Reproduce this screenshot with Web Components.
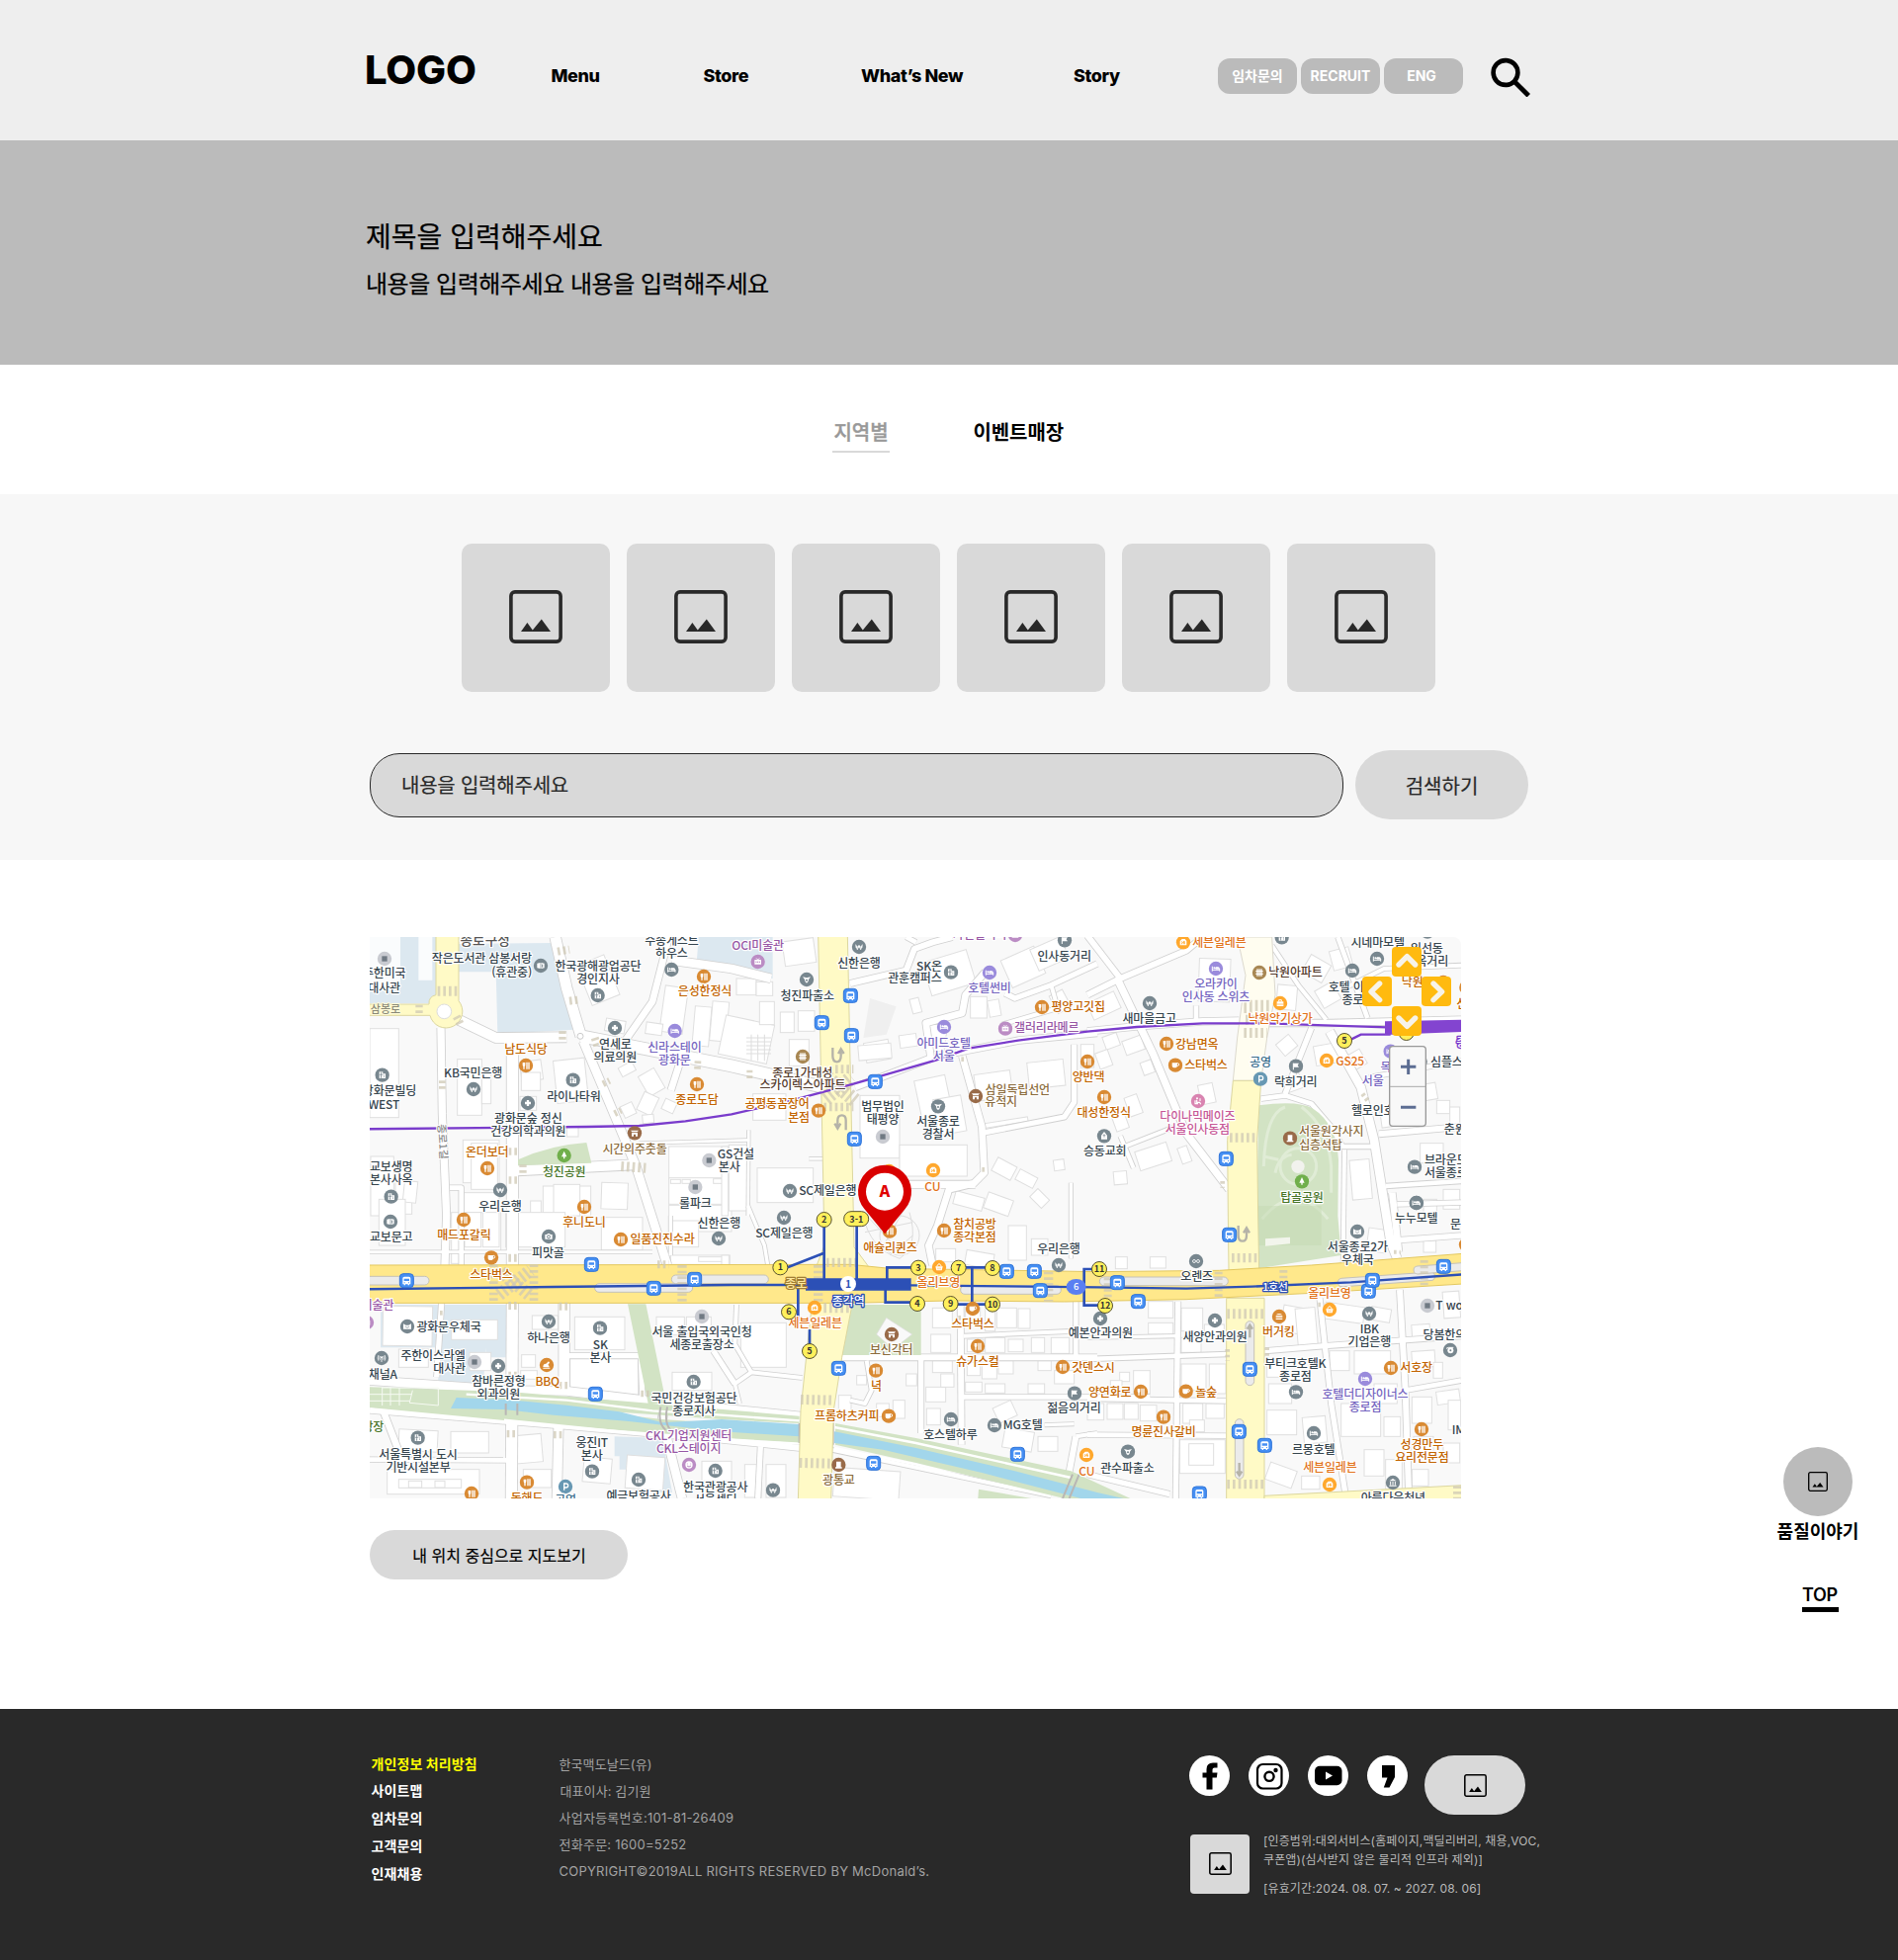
<!DOCTYPE html>
<html lang="ko">
<head>
<meta charset="utf-8">
<title>매장 찾기</title>
<style>
body{margin:0;background:#fff;color:#000;font-family:Inter,"Noto Sans CJK KR",sans-serif;width:1920px;position:relative}
</style>
</head>
<body>
<store-page></store-page>
<script>
const define=(name,html,after)=>customElements.define(name,class extends HTMLElement{
  constructor(){super();this.attachShadow({mode:'open'});}
  connectedCallback(){this.shadowRoot.innerHTML=typeof html==='function'?html(this):html;if(after)after(this);}
});

define('picture-icon',`<style>:host{display:block;flex:none}svg{display:block;width:100%;height:100%}</style>
<svg viewBox="0 0 54 54"><rect x="1.9" y="1.9" width="50.2" height="50.2" rx="4" fill="none" stroke="currentColor" stroke-width="3.6"/><path d="M12 42L18.400 33L23.800 40.500L32.800 29.500L42 42z" fill="currentColor"/></svg>`);

define('nav-link',`<style>:host{display:block;flex:none;font:800 18px/24px Inter,"Noto Sans CJK KR",sans-serif;white-space:nowrap;letter-spacing:-.4px}</style><slot></slot>`);
define('pill-link',`<style>:host{display:flex;align-items:center;justify-content:center;width:80px;height:36px;border-radius:12px;background:#bbb;color:#fff;font:700 14px/20px Inter,"Noto Sans CJK KR",sans-serif}</style><slot></slot>`);

define('site-header',`<style>
:host{display:flex;align-items:center;box-sizing:border-box;height:142px;padding:12px 0 0 369px;background:#eee}
.logo{width:188.500px;font:800 40px/48px Inter,sans-serif;margin-bottom:13px;letter-spacing:-.2px}
.pills{display:flex;gap:4px;width:276px}
svg{width:40px;height:40px;display:block;margin-top:1px}
</style>
<div class="logo">LOGO</div>
<nav-link style="width:154px">Menu</nav-link><nav-link style="width:159.500px">Store</nav-link><nav-link style="width:215px">What’s New</nav-link><nav-link style="width:146px">Story</nav-link>
<div class="pills"><pill-link>임차문의</pill-link><pill-link>RECRUIT</pill-link><pill-link style="padding-right:4px;box-sizing:border-box">ENG</pill-link></div>
<svg viewBox="0 0 40 40" fill="none" stroke="#000"><circle cx="15" cy="15.500" r="12.400" stroke-width="4.600"/><path d="M24 24.500L38.300 38.800" stroke-width="4.800"/></svg>`);

define('hero-banner',`<style>
:host{display:block;box-sizing:border-box;height:227px;background:#bbb;padding:77.500px 0 0 370px;-webkit-text-stroke:.25px #000}
h1,p{margin:0;font-weight:400}h1{font-size:28px;line-height:40px}p{font-size:24px;line-height:34px;margin-top:11px;letter-spacing:-.48px}
</style><h1><slot name="title"></slot></h1><p><slot name="text"></slot></p>`);

define('tab-item',`<style>
:host{display:block;flex:none;font-size:20px;line-height:30px;text-align:center;font-weight:700;padding-bottom:3px;white-space:nowrap;letter-spacing:-.1px}
:host([selected]){width:58px;color:#999;border-bottom:2px solid #d9d9d9;font-weight:500;-webkit-text-stroke:.4px #999}
</style><slot></slot>`);
define('tab-bar',`<style>:host{display:flex;align-items:flex-start;box-sizing:border-box;height:131px;padding:54px 0 0 842px;gap:84.500px}</style><slot></slot>`);

define('image-card',`<style>:host{display:flex;align-items:center;justify-content:center;width:150px;height:150px;border-radius:10px;background:#d9d9d9;color:#292929}picture-icon{width:54px;height:54px;margin-top:-2px}</style><picture-icon></picture-icon>`);

define('round-button',`<style>:host{display:flex;align-items:center;justify-content:center;background:#d9d9d9;border-radius:40px;white-space:nowrap;-webkit-text-stroke:.2px currentColor}</style><slot></slot>`);

define('search-panel',`<style>
:host{display:block;box-sizing:border-box;height:370px;background:#f7f7f7;padding-top:50px}
.cards{display:flex;gap:17px;padding-left:467px}
.row{display:flex;align-items:center;gap:12px;padding-left:374px;margin-top:59px}
.field{box-sizing:border-box;width:985px;height:65px;border:1px solid #292929;border-radius:30px;background:#d9d9d9;color:#292929;font-size:20px;line-height:65px;padding-left:31px;letter-spacing:-.22px;-webkit-text-stroke:.2px #292929}
round-button{width:175px;height:70px;font-size:20px;color:#292929}
</style>
<div class="cards"><image-card></image-card><image-card></image-card><image-card></image-card><image-card></image-card><image-card></image-card><image-card></image-card></div>
<div class="row"><div class="field">내용을 입력해주세요</div><round-button>검색하기</round-button></div>`);

/* ---- map ---- Sheets are placed on one plane, three units per pixel. */
const SHEET={A:[0,0],B:[1110,0],C:[2220,0],D:[0,840],E:[1110,840],F:[2220,840]};
const at=(k,b)=>`<g transform="translate(${SHEET[k]})">${b}</g>`;

const ROADS={
A:`22 258,300 262,560 275,870 270,1020;30 290,265 425,330 640,328;32 683,325 640,180 605,24;36 683,325 735,335 1140,415 1420,480;26 690,340 800,600 850,720 945,1020;34 475,335 475,1020;30 490,733 845,715;20 820,335 900,220 950,24;20 985,400 956,490;26 960,95 1140,120 1260,150;8 860,650 1195,640;14 285,785 320,785 320,1020`,
B:`18 390,165 560,125 585,60 640,40 700,24;20 405,480 635,392 620,285 730,255 740,200 800,130;20 730,385 790,600 797,740 765,772 690,790 655,900 628,960 640,1020;22 560,775 770,775;16 785,620 1040,570 1070,525 1070,350;20 710,375 900,338 1140,315;16 860,195 890,210 1000,170 1140,105;12 1000,170 1020,240 850,290;8 265,697 312,697;8 82,610 80,870;10 1060,770 1060,1000;14 560,24 590,40`,
C:`18 0,200 100,150 300,65 350,24;18 100,150 0,20;22 95,160 200,380 300,620 430,790;20 0,310 150,295 350,280 460,278;20 540,285 740,285 1134,275;12 100,665 265,600;12 100,628 140,725;14 330,232 330,280;12 560,50 640,170 725,275;26 735,310 830,480 870,640 920,950 940,1000;16 680,300 600,500;14 527,515 600,505 680,530 740,600 775,660 880,660;18 885,622 1134,600;12 780,670 776,1010;14 905,780 1134,765;14 855,450 1134,400;16 930,945 1134,930;14 850,270 760,24;12 780,180 900,120 1134,110`,
D:`34 475,295 472,888;16 260,295 245,520;32 632,295 632,560;26 42,530 470,560 640,562 960,600 1360,640;18 42,620 600,665 1110,710 1350,735;16 645,455 865,455 870,590;20 82,620 140,770;14 42,770 460,772;28 615,670 610,888;26 935,605 930,650 990,888;16 1085,440 1150,540;8 42,140 900,140;10 955,150 955,30`,
E:`12 0,480 40,540 90,505 245,522;10 40,540 55,600;16 118,730 110,888;10 80,0 130,120 140,180;12 45,300 40,420 90,505;18 365,460 1140,460;16 605,455 605,690;18 725,300 728,725;14 1075,290 1075,460;14 735,580 1300,580;18 1075,700 1040,888;12 440,470 455,560 435,600 390,590;10 980,665 1070,662;12 1075,700 1140,690;12 735,395 1075,380;12 332,740 1000,880`,
F:`16 275,290 268,888;14 0,465 425,450;10 0,400 270,395;14 0,585 420,592;14 0,695 420,698;16 540,440 720,425 1134,395;16 705,280 740,600 785,888;18 948,255 965,560 975,870;14 965,560 1134,530;16 0,815 250,875;14 940,-5 1134,-10;20 925,-40 945,140`
};
const roads=()=>{let a='',b='';for(const k in ROADS){let x='',y='';for(const r of ROADS[k].split(';')){const i=r.indexOf(' ');const w=+r.slice(0,i),p=r.slice(i+1);
 x+=`<polyline points="${p}" stroke-width="${w+5}"/>`;y+=`<polyline points="${p}" stroke-width="${w}"/>`;}a+=at(k,x);b+=at(k,y);}
 return `<g fill="none" stroke-linejoin="round"><g stroke="#d0d0d0">${a}</g><g stroke="#fff">${b}</g></g>`;};

/* x y w h angle */
const HOUSES={
A:`42 302 88 270 0;308 395 74 170 0;382 420 28 110 0;500 400 65 60 -8;502 435 58 55 0;498 508 50 42 0;605 395 95 130 -6;800 410 46 30 -28;870 430 55 70 -30;862 500 48 60 25;808 530 38 38 -25;932 520 38 34 25;870 563 34 26 -5;745 770 80 80 2;930 175 70 140 8;880 285 50 35 8;690 90 90 130 -22;757 275 60 38 10;1025 235 50 120 5;1078 220 50 120 5;568 780 145 90 0;600 775 80 95 0;530 825 32 60 0;325 640 110 130 0;350 650 80 140 0;325 800 110 130 0;45 690 70 180 0;120 715 50 150 0;145 765 40 65 6;950 660 190 100 0;950 755 190 80 0;955 760 30 12 0;990 760 25 12 0;1085 758 28 14 0;950 838 190 80 0;640 600 35 30 0`,
B:`178 252 42 62 0;232 248 50 62 0;188 32 95 75 -8;45 150 60 50 0;105 160 50 42 0;0 275 150 120 12;115 220 45 70 0;435 340 75 60 -10;415 350 100 45 -5;540 320 52 38 -8;575 210 28 45 -15;620 80 140 105 -17;860 70 110 90 -24;945 40 100 70 -24;1005 190 45 60 -28;755 205 50 65 0;810 215 35 50 -10;620 290 60 80 8;600 450 95 165 -12;650 510 85 110 -10;420 505 120 190 0;540 655 205 95 0;930 400 110 80 -6;770 435 110 80 -8;795 580 135 14 -9;1090 350 40 70 0;108 725 170 105 0;95 500 100 80 0;825 705 65 45 28;895 740 60 35 28;705 805 90 40 15;800 810 80 50 20;1008 700 32 32 -8;940 800 50 35 45;0 660 20 210 0;22 655 55 200 0;205 335 60 80 0`,
C:`338 90 95 130 2;5 205 90 55 -25;50 320 45 40 -20;110 330 60 45 -20;165 400 35 40 -20;30 370 40 50 -20;120 505 40 60 -20;80 560 40 50 -20;150 660 100 60 -18;280 660 30 50 -20;80 735 40 40 -5;340 470 45 60 -12;575 170 60 75 5;580 330 50 45 -40;690 350 70 60 -10;600 440 50 50 -20;660 90 70 60 30;740 60 60 60 -15;700 170 60 60 -30;800 370 40 50 -30;1060 520 40 40 0;1100 540 30 60 0;800 700 60 120 -5;1080 790 50 60 0;1010 650 70 60 0;1020 820 40 50 0;890 540 50 60 -8;1000 470 60 50 -10`,
D:`82 305 150 120 1;290 346 140 60 0;130 435 90 55 0;345 445 65 55 0;535 333 78 42 0;503 452 42 38 0;500 500 50 26 0;664 337 152 100 0;960 505 120 55 0;912 337 85 55 0;1003 337 75 50 0;130 680 118 65 3;288 685 115 65 0;475 695 90 85 -5;508 800 85 55 0;650 460 207 120 0;95 800 280 75 0;130 830 190 26 0;160 835 40 20 0;240 835 30 20 0;455 20 180 105 0;745 35 125 100 0;290 20 150 120 0;330 20 50 105 0;385 20 50 105 0;290 140 30 35 0;950 45 90 80 0;955 150 180 28 0;1040 155 80 14 0;70 -20 80 140 0;690 765 85 75 5;820 760 115 100 4;1050 775 90 60 0`,
E:`58 355 138 135 0;0 150 22 50 0;640 310 60 60 0;635 390 60 55 0;740 308 45 50 0;835 310 60 60 0;800 310 30 70 0;900 312 36 60 0;800 400 60 45 0;745 405 50 38 0;870 405 45 38 0;940 400 40 45 0;1000 400 55 48 0;640 470 60 36 0;745 475 40 40 0;790 480 45 45 0;840 470 45 40 0;960 470 40 30 0;1010 500 60 40 0;740 535 50 30 0;800 540 60 28 0;930 540 50 30 0;620 550 60 45 0;622 615 42 50 0;665 510 40 40 0;830 600 60 50 -25;855 680 90 60 10;960 700 60 45 0;870 60 55 105 0;940 100 50 50 0;740 140 85 45 10;650 130 60 40 0;355 575 38 55 0;470 600 38 40 0;520 590 36 55 0;560 510 32 36 0;410 515 30 28 0;70 785 50 100 0;135 785 60 100 0;340 800 200 88 4`,
F:`85 155 36 36 0;190 155 48 34 0;185 290 75 50 0;185 355 75 35 0;285 310 65 70 0;355 360 60 35 0;285 400 60 45 0;98 505 30 28 0;70 530 35 45 0;140 500 50 70 0;285 480 75 80 0;370 480 50 90 0;60 600 48 48 0;112 600 42 48 0;160 605 50 48 0;0 600 50 50 0;290 600 60 60 0;360 600 55 45 0;310 650 45 36 0;280 710 138 102 0;308 722 75 65 0;590 305 60 80 10;635 310 60 115 -5;545 470 60 50 0;550 540 70 60 0;545 620 90 75 0;655 640 70 80 -5;545 790 85 55 20;650 820 55 40 0;720 300 120 50 8;860 310 60 40 10;735 440 60 60 0;810 440 110 70 0;770 600 120 100 0;870 540 70 60 0;900 640 50 60 0;840 740 60 80 0;905 770 50 90 0;985 440 70 50 -4;1050 475 28 48 0;985 580 60 80 0;1060 560 70 40 -8;990 700 60 55 0;1095 590 38 90 0;1080 720 50 60 0;985 800 50 50 0;1020 105 38 36 0;850 70 60 70 8;1080 260 50 80 -4;985 360 55 50 -4`
};
const houses=()=>{let s='';for(const k in HOUSES)s+=at(k,HOUSES[k].split(';').map(h=>{const[x,y,w,d,r]=h.split(' ').map(Number);return`<rect x="${x}" y="${y}" width="${w}" height="${d}"${r?` transform="rotate(${r} ${x+w/2} ${y+d/2})"`:''}/>`}).join(''));
 return `<g fill="#fff" stroke="#dfdfdf" stroke-width="3">${s}</g>`;};

const TONE={g:'#36454e',o:'#c26400',y:'#e2731b',p:'#7565c0',v:'#9757a5',b:'#8b6c3d',k:'#533a2c',n:'#467427',t:'#3a6c8a',r:'#c65796'};
/* x, ink centre y, tone, lines */
const LABELS={
A:`382 90 g 작은도서관 삼봉서랑;473 131 g (휴관중);86 135 g 주한미국;86 178 g 대사관;735 112 g 한국광해광업공단;735 153 g 경인지사;958 36 g 수송게스트/하우스;1059 189 o 은성한정식;787 349 g 연세로/의료의원;967 358 p 신라스테이/광화문;516 364 o 남도식당;356 437 g KB국민은행;661 509 g 라이나타워;102 492 g 광화문빌딩/;85 532 g WEST;523 576 g 광화문숲 정신/건강의학과의원;1035 517 o 종로도담;846 667 b 시간의주춧돌;398 676 o 온더보더;632 736 n 청진공원;107 722 g 교보생명/본사사옥;438 841 g 우리은행;1030 832 g 롤파크;1153 682 g GS건설;1133 722 g 본사`,
B:`110 49 v OCI미술관;417 104 g 신한은행;630 112 g SK온;586 150 g 관훈캠퍼스;813 180 p 호텔썬비;986 300 v 갤러리라메르;1082 237 o 평양고깃집;1040 82 g 인사동거리;783 18 v 가진갤러리;260 202 g 청진파출소;674 346 p 아미드호텔/서울;245 436 k 종로1가대성;246 473 k 스카이렉스아파트;168 531 o 공평동꼼장어;234 571 o 본점;489 540 g 법무법인/태평양;657 585 g 서울종로/경찰서;898 487 b 삼일독립선언;848 525 b 유적지;1113 448 o 양반댁;1160 558 o 대성한정식;1163 675 g 승동교회;322 794 g SC제일은행;640 781 y CU`,
C:`400 41 y 세븐일레븐;390 168 p 오라카이/인사동 스위츠;188 272 g 새마을금고;631 132 k 낙원아파트;585 272 y 낙원악기상가;881 40 g 시네마모텔;1030 58 g 익선동/한옥거리;785 175 g 호텔 이;805 215 g 종로;986 162 o 낙원;332 349 o 강남면옥;360 413 o 스타벅스;525 405 t 공영;632 465 g 락희거리;797 400 y GS25;906 418 p 목;866 460 p 서울;1090 404 g 심플스;866 552 g 헬로인호;1115 607 g 춘원;334 570 r 다이나믹메이즈/서울인사동점;740 615 b 서울원각사지;708 655 b 십층석탑;651 814 n 탑골공원;1088 702 g 브라운도/서울종로;1136 226 o 신`,
D:`107 95 g 교보문고;328 90 o 매드포갈릭;693 51 o 후니도니;583 142 g 피맛골;930 102 o 일품진진수라;1102 52 g 신한은행;411 208 o 스타벅스;66 303 v 미술관;282 367 g 광화문우체국;234 455 g 주한이스라엘;284 493 g 대사관;433 533 g 참바른정형/외과의원;82 512 g 채널A;585 400 g 하나은행;742 422 g SK/본사;581 532 o BBQ;1050 384 g 서울 출입국외국인청/세종로출장소;1026 583 g 국민건강보험공단/종로지사;1010 697 v CKL기업지원센터/CKL스테이지;716 719 g 웅진IT/본사;189 754 g 서울특별시 도시/기반시설본부;52 670 n 광장;519 888 o 동해도;636 893 t 공영;858 880 g 예금보험공사;1091 853 g 한국관광공사/서울센터`,
E:`190 84 g SC제일은행;511 127 o 애슐리퀸즈;768 55 o 참치공방/종각본점;1023 130 g 우리은행;658 232 y 올리브영;284 357 y 세븐일레븐;762 359 o 스타벅스;515 437 b 보신각터;777 474 o 슈가스컬;469 549 o 녁;1128 490 o 갓덴스시;1069 615 g 젊음의거리;380 638 o 프롬하츠커피;694 696 g 호스텔하루;914 666 g MG호텔;355 832 b 광통교;1150 387 g 예본안과의원;1108 806 y CU`,
F:`998 39 g 누누모텔;1117 55 g 문;820 124 g 서울종로2가/우체국;332 215 g 오렌즈;735 267 y 올리브영;387 397 g 새양안과의원;580 384 o 버거킹;856 374 g IBK/기업은행;1098 302 g T wo;1084 392 g 당봄한의;631 478 g 부티크호텔K/종로점;998 490 o 서호장;843 573 p 호텔더디자이너스/종로점;360 565 o 놀숲;68 565 o 양연화로;231 687 o 명륜진사갈비;121 796 g 관수파출소;686 739 g 르몽호텔;1015 726 o 성경만두/요리전문점;736 795 y 세븐일레븐;928 888 g 아름다운청년;1126 680 g IM`
};
const labels=()=>{let s='';for(const k in LABELS)s+=at(k,LABELS[k].split(';').map(l=>{const m=l.match(/^(\S+) (\S+) (\S) (.*)$/);return m[4].split('/').map((t,i)=>t?`<text x="${m[1]}" y="${+m[2]+13+i*39}" fill="${TONE[m[3]]}">${t}</text>`:'').join('')}).join(''));
 return `<g font-size="36" text-anchor="middle" stroke="#fff" stroke-width="7" stroke-linejoin="round" paint-order="stroke" letter-spacing="-.5">${s}</g>`;};

const BED='<path d="M-11-7V8M-11 4H11M11 8V0H-1V-3" fill="none" stroke="#fff" stroke-width="3"/><path d="M-1-5H7Q11-5 11 1H-1Z" fill="#fff"/><circle cx="-5" cy="-2" r="3" fill="#fff"/>';
const GLYPH={
bld:['#78878f','<path d="M-9 10V-10H2V-4H10V10Z" fill="#fff"/><path d="M-5-5H-2M-5 0H-2M-5 5H-2M4 1H7M4 5H7M-9-1H2M-3-10V10" stroke="#78878f" stroke-width="2"/>'],
won:['#78878f','<path d="M-10-7L-5 8L0-5L5 8L10-7M-11 0H11" fill="none" stroke="#fff" stroke-width="3"/>'],
bed:['#78878f',BED],
pbed:['#9a8bdc',BED],
med:['#78878f','<path d="M-9 0H9M0-9V9" stroke="#fff" stroke-width="7"/>'],
eat:['#d98a33','<path d="M-10-9H-2Q-1 1-4 3V11H-8V3Q-11 1-10-9Z" fill="#fff"/><path d="M3-10V11M9-10V11" stroke="#fff" stroke-width="4"/>'],
cup:['#d98a33','<path d="M-10-7H6V1Q6 8-2 8Q-10 8-10 1Z" fill="#fff"/><circle cx="7" cy="-2" r="4" fill="none" stroke="#fff" stroke-width="3"/>'],
bur:['#d98a33','<path d="M-10-5Q0-13 10-5ZM-10-2H10V2H-10ZM-10 5H10V9H-10Z" fill="#fff"/>'],
chk:['#d98a33','<path d="M-11 6Q-11-4-2-4L6-11L9-7L4-1Q10 4 7 7ZM-11 8H10V11H-11Z" fill="#fff"/>'],
shop:['#ffa82d','<path d="M-10 9V-4L-4-10H5L10-4V9Z" fill="#fff"/><path d="M-5 6Q-1-2-5-3M3-4L-1 2H6M3-4V6" fill="none" stroke="#ffa82d" stroke-width="2.500"/>'],
bsk:['#ffa82d','<path d="M-11-2H11L8 10H-8Z" fill="#fff"/><path d="M-7-2Q0-18 7-2" fill="none" stroke="#fff" stroke-width="3"/><path d="M-3 2V7M3 2V7" stroke="#ffa82d" stroke-width="2"/>'],
bag:['#ffa82d','<path d="M-10-5H10V9H-10Z" fill="#fff"/><path d="M-4-5V-10H4V-5" fill="none" stroke="#fff" stroke-width="3"/><path d="M-10 3H10" stroke="#ffa82d" stroke-width="2"/>'],
art:['#bb8cc4','<path d="M-10-6H10V8H-10Z" fill="#fff"/><path d="M-5-11L0-6L5-11" fill="none" stroke="#fff" stroke-width="2.500"/><path d="M-5 3V-1M0 3V-1M5 3V-1" stroke="#bb8cc4" stroke-width="3"/>'],
face:['#bb8cc4','<circle r="11" fill="#fff"/><path d="M-5-4V-2M5-4V-2M-6 3Q0 9 6 3" fill="none" stroke="#bb8cc4" stroke-width="3"/>'],
fun:['#d984b1','<circle cx="-3" cy="-8" r="3" fill="#fff"/><path d="M-4-4V4H5L8 10M-9-2V8H0M6-8V0" fill="none" stroke="#fff" stroke-width="3.500"/>'],
gate:['#996b49','<path d="M-12-8H12L8-3H-8ZM-9-1H9V10H3V4H-3V10H-9Z" fill="#fff"/>'],
stn:['#996b49','<path d="M-7-10H7V7H10V11H-10V7H-7Z" fill="#fff"/>'],
apt:['#a88753','<path d="M-6-11V11M0-11V11M6-11V11M-11-4H11M-11 4H11" stroke="#fff" stroke-width="4"/>'],
tree:['#70af4b','<path d="M0-13L8 4H2V10H-2V4H-8Z" fill="#fff"/>'],
flag:['#78878f','<path d="M-8-9V11" stroke="#fff" stroke-width="3"/><path d="M-8-9H9L5-3L9 3H-8Z" fill="#fff"/>'],
cop:['#78878f','<path d="M-12-8L0-5L12-8L6 0Q6 9 0 11Q-6 9-6 0Z" fill="#fff"/><circle cy="2" r="3" fill="#78878f"/>'],
book:['#78878f','<path d="M-11-7L-1-9V9L-11 7ZM1-9L11-7V7L1 9Z" fill="#fff"/><path d="M5-4V5" stroke="#78878f" stroke-width="3"/>'],
cam:['#78878f','<path d="M-11-6H-5L-3-9H3L5-6H11V8H-11Z" fill="#fff"/><circle cy="1" r="4.500" fill="none" stroke="#78878f" stroke-width="3"/>'],
post:['#78878f','<path d="M-12-8L-4-4H4L12-8V8H-12Z" fill="#fff"/><path d="M-6 0L0 4L6 0" fill="none" stroke="#78878f" stroke-width="2"/>'],
ant:['#78878f','<path d="M0-2V12M-5-6Q-8 0-5 5M5-6Q8 0 5 5M-9-9Q-14 0-9 8M9-9Q14 0 9 8" fill="none" stroke="#fff" stroke-width="2.500"/><circle cy="-2" r="3" fill="#fff"/>'],
eye:['#78878f','<circle cx="-6" r="4.500" fill="none" stroke="#fff" stroke-width="2.500"/><circle cx="6" r="4.500" fill="none" stroke="#fff" stroke-width="2.500"/>'],
chu:['#78878f','<path d="M0-13L9-2V10H-9V-2Z" fill="#fff"/><path d="M0-6V4M-4-2H4" stroke="#78878f" stroke-width="2"/>'],
mus:['#78878f','<path d="M-11-5L0-12L11-5ZM-11 8H11V11H-11Z" fill="#fff"/><path d="M-7-3V8M0-3V8M7-3V8" stroke="#fff" stroke-width="3"/>'],
pot:['#78878f','<circle cx="1" cy="1" r="9" fill="#fff"/><circle cx="1" cy="1" r="3" fill="#78878f"/><path d="M-12-5L-5-8H10" fill="none" stroke="#fff" stroke-width="3"/>'],
park:['#6798b3','<path d="M-4 11V-9H2Q8-9 8-3Q8 3 2 3H-4" fill="none" stroke="#fff" stroke-width="4"/>'],
dot:['#c9cbd1','<rect x="-8" y="-8" width="16" height="16" fill="#707a83"/>']
};
const PINS={
A:`dot 87 90;book 561 111;bld 734 201;bed 958 123;eat 1056 144;med 786 300;pbed 968 309;eat 516 414;won 357 486;bld 659 458;bld 80 443;med 522 528;eat 1035 471;gate 846 619;eat 399 726;tree 632 687;won 438 792;dot 1072 702;dot 1030 783;bld 107 812;eat 693 843`,
B:`art 110 99;won 417 54;bld 696 131;pbed 813 132;art 861 302;eat 972 237;flag 1041 34;art 891 18;cop 258 153;pbed 675 297;apt 246 387;eat 294 551;dot 489 630;cop 657 538;gate 771 507;eat 1110 402;eat 1161 510;chu 1161 628;won 207 795;shop 642 732;shop 508 735`,
C:`shop 291 40;pbed 390 120;won 189 225;apt 522 132;bag 585 225;bed 879 90;bed 804 126;bld 590 25;eat 240 348;cup 267 413;park 525 455;flag 633 416;shop 726 399;pbed 920 371;med 1010 402;fun 336 522;stn 615 635;tree 651 766;bed 993 722;bed 999 831;eat 1080 162;eat 1150 177;med 1032 8`,
D:`book 105 48;eat 327 42;cam 585 93;eat 804 102;won 1101 99;cup 411 157;post 156 366;dot 360 474;med 432 486;ant 78 462;won 585 351;bld 741 371;chk 579 483;dot 1050 336;bld 1025 534;art 33 354;face 1011 786;bld 717 806;bld 188 704;eat 519 839;park 636 852;bld 858 831;bld 1091 804;eat 351 873`,
E:`won 189 36;eat 510 77;eat 675 75;won 1023 180;bsk 660 186;shop 282 309;cup 762 312;gate 516 390;eat 777 426;eat 468 500;eat 1035 489;flag 1071 569;cup 507 638;bed 696 648;bed 828 666;stn 355 786;med 1149 342;shop 1107 756;won 156 863`,
F:`bed 998 -9;post 819 78;eye 330 168;bsk 735 315;med 387 348;bur 582 336;won 855 327;dot 1032 303;pot 1101 438;bed 633 565;eat 921 492;pbed 843 525;eat 162 564;cup 299 563;eat 231 641;cop 123 746;bed 687 690;eat 1014 678;shop 735 846;mus 927 840;eat 1149 118`
};
const pins=()=>{let s='';for(const k in PINS)s+=at(k,PINS[k].split(';').map(p=>{const[n,x,y]=p.split(' ');return`<g transform="translate(${x} ${y})"><circle r="21.500" fill="${GLYPH[n][0]}"/>${GLYPH[n][1]}</g>`}).join(''));return s;};

const BUS={B:'391 202;304 284;394 323;466 463;403 637',C:'421 697',D:'154 227;715 178;904 250;1028 223;727 571',E:'865 199;949 199;967 257;355 493;461 781;898 754',F:'431 88;91 233;154 290;1081 184;853 259;865 226;493 496;460 685;538 727;340 873'};
const buses=()=>{let s='';for(const k in BUS)s+=at(k,BUS[k].split(';').map(p=>`<g transform="translate(${p})"><rect x="-21" y="-21" width="42" height="42" rx="11" fill="#458ff3" stroke="#2f74d8" stroke-width="3"/><path d="M-12 11V-7Q-12-12-7-12H7Q12-12 12-7V11H8V14H4V11H-4V14H-8V11Z" fill="#fff"/><path d="M-8-6H8V1H-8ZM-8 5H-5V8H-8ZM5 5H8V8H5Z" fill="#458ff3"/></g>`).join(''));return s;};

const CROSS={A:'30 248,188 312,188;22 192,230 192,262;22 627,310 627,342;24 612,68 648,62;24 648,218 680,214;24 305,265 318,290;24 725,330 735,360;20 1038,400 1036,432;20 262,460 262,485;22 464,675 492,675;22 507,715 507,750;22 464,762 492,762;30 805,720 880,725;20 750,470 770,460;20 785,560 805,550',
B:'26 345,425 400,425;26 310,540 400,540;44 315,515 395,450;44 320,450 405,520;18 85,428 85,460;14 727,395 744,395;14 790,730 805,730',
C:'40 475,235 560,235;30 480,275 560,275;30 475,315 545,315;28 432,633 515,633;14 835,500 850,520;14 410,765 410,785',
D:'24 463,158 495,158;26 418,178 418,295;26 540,178 540,295;38 435,270 530,195;38 440,200 525,270;24 463,303 495,303;24 617,305 650,305;24 463,515 490,515;22 617,545 648,545;22 458,692 488,692;22 600,695 632,695;28 990,180 990,295;24 915,178 950,178;14 255,325 270,325;20 890,570 860,570',
E:'28 318,172 410,172;28 293,180 293,295;30 310,310 390,310;30 240,588 340,590;30 236,780 335,782;28 992,200 992,290;14 718,340 735,340',
F:'28 438,158 520,158;30 424,328 535,328;28 424,845 535,845;24 62,218 62,285;24 398,200 398,280;24 595,195 595,275;24 1022,165 1022,245;14 425,435 425,470;14 545,430 545,460;12 930,140 950,140;24 1122,850 1122,890;14 700,300 718,300'};
const cross=()=>{let s='';for(const k in CROSS)s+=at(k,CROSS[k].split(';').map(c=>{const i=c.indexOf(' ');return`<polyline points="${c.slice(i+1)}" stroke-width="${c.slice(0,i)}"/>`}).join(''));return`<g fill="none" stroke="#cfc8b4" stroke-opacity=".75" stroke-dasharray="8 9">${s}</g>`;};

const EXITS={C:'5 780 339;4 968 315',E:'1 178 187;2 311 42;3 597 188;7 719 188;8 822 189;4 594 297;9 695 297;10 822 299;6 204 322;5 267 441',F:'11 36 192;12 54 303'};
const exits=()=>{let s='';for(const k in EXITS)s+=at(k,EXITS[k].split(';').map(e=>{const[n,x,y]=e.split(' ');return`<circle cx="${x}" cy="${y}" r="22.500"/><text x="${x}" y="${+y+9}">${n}</text>`}).join(''));
 s+=at('E','<rect x="371" y="17" width="75" height="45" rx="22"/><text x="409" y="50">3-1</text>');
 return `<g class="exit">${s}</g>`;};

define('city-map',()=>`<style>
:host{display:block;width:1104px;height:568px;overflow:hidden;border-radius:0 8px 0 0}
svg{display:block;font-family:"Noto Sans CJK KR",sans-serif;font-weight:500}
.exit circle,.exit rect{fill:#fff05c;stroke:#57512f;stroke-width:3}
.exit text{font:700 27px "Noto Sans CJK KR",sans-serif;fill:#333;text-anchor:middle}
</style>
<svg width="1104" height="568" viewBox="42 24 3312 1704">
<rect x="42" y="24" width="3312" height="1704" fill="#f9f9f9"/>
<g fill="#dce8f0">
<path d="M42 24H243V215L230 225H42ZM310 45L600 42L662 305L430 318L425 130H310ZM1040 24H1265V150L1140 125L1035 90Z"/>
<path d="M75 1140H462L455 1300H395V1270L385 1400H250V1200L240 1270H75ZM785 1540L930 1545L960 1710H905V1640H800V1600H785Z"/></g>
<path d="M42 24H135V165Q135 180 120 185H42ZM190 24H232V155H190Z" fill="#fafcfd"/>
<path d="M1560 210L1640 235L1610 320L1540 330Z" fill="#efefef"/>
${houses()}${roads()}
<g fill="#d2e3c4">
<path d="M492 700Q590 655 700 648L715 710L492 718Z"/><path d="M825 1138H880L942 1440H887Z"/>
<path d="M42 1390L450 1404L458 1450L640 1455L930 1488L1110 1500L1346 1515V1560L1110 1545L600 1505L42 1452Z"/>
<path d="M490 1406L900 1440L1346 1478V1500L1110 1488L640 1455L490 1450Z"/>
<path d="M1455 1500L1700 1545L2170 1645L2350 1728H2150L1700 1620L1455 1565Z"/>
<path d="M1490 1140H1715V1293H1472Z"/><path d="M1890 1700L2050 1728H1888Z"/>
<path d="M2740 535Q2860 518 2905 545Q2975 590 2982 700L2980 870L2990 990L2740 1030L2735 800Z"/></g>
<g fill="none" stroke="#e0ecd6" stroke-width="9"><path d="M2755 720Q2760 560 2820 540M2870 540Q2950 600 2960 720V800M2790 740Q2800 690 2840 685M2755 690L2800 700M2750 880Q2850 760 2950 880"/><circle cx="2860" cy="720" r="55"/></g>
<path d="M2730 840H2930V960H2730Z" fill="#c3d9b2" opacity=".5"/><path d="M2760 940L2835 935V955L2760 962Z" fill="#f2f5ec"/><circle cx="2859" cy="721" r="20" fill="#f2f2ee"/>
<path d="M305 1422L458 1428L640 1445L800 1465L930 1498L1110 1488L1346 1503V1540L1110 1525L960 1508L820 1493L600 1475L450 1458L288 1455Z" fill="#a2d6eb"/>
<path d="M1452 1525L1700 1575L2000 1645L2250 1710L2330 1728H2200L1900 1650L1600 1580L1452 1560Z" fill="#a2d6eb"/>
<path d="M335 1412L640 1430L900 1462L1110 1475L1346 1492M450 1490L900 1535L1346 1562M1452 1512L1700 1560L2170 1665M1452 1575L1700 1625L2000 1700" fill="none" stroke="#fff" stroke-width="7"/>
<path d="M80 1390V1446M105 1390V1446M132 1392V1446M80 1392H250V1446L163 1438L172 1400M42 1412H170M42 1432H165" fill="none" stroke="#f6faf2" stroke-width="3"/>
<path d="M455 1440V1475M490 1440V1475M925 1450Q915 1500 940 1520M945 1450Q935 1500 955 1520M1346 1500V1560M1448 1498V1565M2175 1655L2145 1728M2195 1655L2165 1728" stroke="#b9b6b4" stroke-width="6" fill="none"/>
<path d="M1610 1180L1688 1230L1630 1275L1580 1230Z" fill="#f9f9f9" stroke="#ddd" stroke-width="2"/>
<g fill="none" stroke="#ddd" stroke-width="3"><path d="M1540 870Q1560 970 1650 1000Q1710 960 1680 860M1560 880L1660 990M1545 920L1690 890M1590 980L1670 840M1620 990L1690 930"/><circle cx="1650" cy="930" r="60"/><path d="M1185 330H1260M1185 342H1260M1185 354H1260M1185 366H1260M1185 378H1260M1200 320V400M1220 320V400M1240 320V400"/></g>
<path d="M2675 24H2780L2790 200L2765 330L2747 460H2662L2675 330L2700 140Z" fill="#fffdf0" stroke="#dcd9ce" stroke-width="3"/>
<g fill="#fffac6" stroke="#dcd7a0" stroke-width="3">
<path d="M243 18V200Q220 205 222 228H30V262H225A50 50 0 1 0 312 218V18Z"/>
<path d="M1403 18H1492L1512 965L1560 1030H1395L1422 960Z"/><path d="M1385 1130H1508L1475 1300L1450 1460L1442 1735H1342L1350 1460L1372 1250Z"/>
<path d="M2662 460H2747L2735 640L2738 870L2741 1040H2649L2647 870L2645 640Z"/><path d="M2642 1120H2757V1735H2642Z"/>
<path d="M2757 1720L3360 1688V1735H2757Z"/></g>
<circle cx="268" cy="250" r="22" fill="#fff" stroke="#ddd" stroke-width="3"/><circle cx="681" cy="325" r="9" fill="#fff" stroke="#ccc" stroke-width="3"/>
<path d="M30 1020L1500 1018L1620 1030L2250 1040L2620 1036L2900 1020L3360 985V1077L2900 1105L2520 1124L2150 1131L1800 1128L1500 1135H30Z" fill="#ffe88b" stroke="#e3c860" stroke-width="3"/>
<g fill="#ebebeb" stroke="#c5c2b8" stroke-width="3">
<rect x="20" y="1054" width="202" height="26" rx="13"/><rect x="725" y="1076" width="297" height="26" rx="13"/><rect x="958" y="1050" width="294" height="26" rx="13"/><rect x="1835" y="1082" width="305" height="26" rx="13"/><rect x="2257" y="1056" width="390" height="26" rx="13"/>
<rect x="2980" y="1052" width="295" height="26" rx="13" transform="rotate(-4 3100 1065)"/><rect x="3210" y="1018" width="180" height="24" rx="12" transform="rotate(-4 3290 1030)"/>
<rect x="2700" y="1190" width="26" height="195" rx="13"/><rect x="2668" y="1487" width="26" height="182" rx="13"/></g>
${cross()}
<g fill="none" stroke="#b5b3a8" stroke-width="7"><path d="M1447 360V385Q1447 403 1460 403Q1472 403 1472 385V366M1464 378L1472 364L1481 378M1487 610V580Q1487 565 1475 565Q1462 565 1462 580V600M1453 590L1462 605L1471 590M2678 900V930Q2678 947 2691 947Q2703 947 2703 930V910M2694 922L2703 907L2712 922M2713 1240V1204M2705 1214L2713 1202L2721 1214M2681 1620V1656M2673 1646L2681 1658L2689 1646"/></g>
<path d="M30 607L700 600L860 597L1000 583L1140 562L1310 523L1510 470L1760 398L1860 362L2010 338L2220 311L2370 297L2570 286L2770 286L2940 292L3130 298M3140 320H3050L3020 335" fill="none" stroke="#7a3ccc" stroke-width="7"/>
<path d="M3123 280L3360 275V312L3123 321Z" fill="#8344d0"/>
<g fill="none" stroke="#2c50b6" stroke-width="7">
<path d="M30 1093L600 1086L1140 1080H1380M1680 1081L2250 1087L2520 1091L2720 1085L3020 1072L3360 1048"/>
<path d="M1421 890V1080M1310 1027L1421 983M1520 890V1080M1710 1027H1612V1065M1607 1090V1133H1700M1830 1027H1930M1870 1027V1137M1805 1139H1930M2260 1032H2210V1142H2270M1342 1090V1190M1377 1215V1270" stroke-width="8"/></g>
<path d="M1365 1060H1685V1097H1365Z" fill="#2c50b6"/>
${pins()}
${labels()}
<g text-anchor="middle" paint-order="stroke" stroke-linejoin="round">
<text x="392" y="48" font-size="41" fill="#555" stroke="#fff" stroke-width="7">종로구청</text>
<text x="90" y="256" font-size="33" fill="#8a8978" stroke="#fffbd8" stroke-width="6">삼봉로</text>
<text x="262" y="655" font-size="32" fill="#888" stroke="#fff" stroke-width="6" transform="rotate(86 262 645)">종로1길</text>
<text x="1336" y="1090" font-size="36" fill="#ffe9a0" stroke="#a07d33" stroke-width="7">종로</text>
<text x="1495" y="1143" font-size="36" fill="#fff" stroke="#2c50b6" stroke-width="8">종각역</text>
<text x="2790" y="1097" font-size="32" fill="#fff" stroke="#2c50b6" stroke-width="8">1호선</text>
<text x="3356" y="358" font-size="36" fill="#fff" stroke="#7a3ccc" stroke-width="8">종</text></g>
${buses()}${exits()}
<circle cx="1494" cy="1077" r="24" fill="#fff"/><text x="1494" y="1088" text-anchor="middle" font-size="31" font-weight="700" fill="#2c50b6">1</text>
<ellipse cx="2186" cy="1086" rx="30" ry="24" fill="#5a7ff2"/><text x="2186" y="1096" text-anchor="middle" font-size="28" fill="#fff">6</text>
<path d="M1605 925L1543 849A81 81 0 1 1 1667 849Z" fill="#d90000"/><circle cx="1605" cy="797" r="57" fill="#fff"/><text x="1605" y="813" text-anchor="middle" font-size="46" font-weight="800" fill="#e00000" style="font-family:'Noto Sans',sans-serif">A</text>
<g fill="#ffba0f"><rect x="3144" y="54" width="90" height="90" rx="12"/><rect x="3054" y="144" width="90" height="90" rx="12"/><rect x="3234" y="144" width="90" height="90" rx="12"/><rect x="3144" y="234" width="90" height="90" rx="12"/></g>
<g fill="none" stroke="#f7f3e8" stroke-width="16" stroke-linecap="round" stroke-linejoin="round"><path d="M3165 108L3190 83L3215 108M3107 165L3081 190L3107 215M3270 165L3296 190L3270 215M3165 270L3190 295L3215 270"/></g>
<rect x="3137" y="356" width="110" height="242" rx="10" fill="#f8f8f8" stroke="#999" stroke-width="4"/><path d="M3137 478H3247" stroke="#aaa" stroke-width="3"/>
<path d="M3171 418H3217M3194 395V441M3171 541H3217" stroke="#5c6d92" stroke-width="9"/>
</svg>`);

define('map-section',`<style>:host{display:block;box-sizing:border-box;height:859px;padding:78px 0 0 374px}round-button{width:261px;height:50px;box-sizing:border-box;padding:0 0 1px 1px;margin-top:32px;font-size:16px}</style>
<city-map></city-map><round-button>내 위치 중심으로 지도보기</round-button>`);

define('floating-menu',`<style>
:host{position:absolute;top:1464px;left:1789px;width:100px;display:flex;flex-direction:column;align-items:center}
.disc{width:70px;height:70px;border-radius:50%;background:#bbb;display:flex;align-items:center;justify-content:center}
picture-icon{width:20px;height:20px}
b{font-size:18px;line-height:30px;white-space:nowrap;margin-top:1px}
.top{margin:37px 0 0 5px;width:37px;box-sizing:border-box;border-bottom:5px solid #000;font:600 18px/24px Inter,sans-serif;text-align:left;letter-spacing:-.3px}
</style><div class="disc"><picture-icon></picture-icon></div><b>품질이야기</b><div class="top">TOP</div>`);

define('social-link',e=>{const g={facebook:'<path d="M17.500 34.500V22.500H13.500V17.500H17.500V14Q17.500 7.500 24 7.500H28.500V12.500H25.500Q23.500 12.500 23.500 14.500V17.500H28.500L27.800 22.500H23.500V34.500Z" fill="#000"/>',
instagram:'<rect x="9" y="9" width="24.500" height="24.500" rx="5.500" fill="none" stroke="#000" stroke-width="2.200"/><circle cx="21" cy="21.300" r="4.600" fill="none" stroke="#000" stroke-width="2.400"/><circle cx="27.500" cy="15" r="2.200" fill="#000"/>',
youtube:'<rect x="7" y="10.700" width="27.500" height="19.500" rx="5" fill="#000"/><path d="M18 16.500L25 20.500L18 24.500Z" fill="#fff"/>',
kakao:'<path d="M15 10H28V22L22.500 32.500H16.800L20.500 22.500H15Z" fill="#000"/>'}[e.getAttribute('kind')];
return `<style>:host{display:block;width:41px;height:41px}svg{display:block}</style><svg width="41" height="41"><circle cx="20.500" cy="20.500" r="20.500" fill="#fff"/>${g}</svg>`;});

define('site-footer',`<style>
:host{display:flex;box-sizing:border-box;height:254px;background:#292929;padding:41.500px 0 0 375.500px;white-space:nowrap}
.links{width:190px;font:700 14px/27.800px Inter,"Noto Sans CJK KR",sans-serif;color:#fff;letter-spacing:.1px}.links :first-child{color:#ff0}
.info{width:637.500px;font-size:13px;line-height:27.200px;color:#a3a3a3;padding-top:1px;letter-spacing:.25px}
.info :first-child,.info :nth-child(2){letter-spacing:.1px}
.social{display:flex;align-items:flex-start;gap:19px;padding-top:5.500px}
.badge{width:102px;height:60px;border-radius:30px;background:#d9d9d9;display:flex;align-items:center;justify-content:center;margin-left:-2px;color:#000}
picture-icon{width:23px;height:23px}
.cert{display:flex;margin:20px 0 0 1px;gap:14px}
.sq{width:60px;height:60px;border-radius:4px;background:#d9d9d9;display:flex;align-items:center;justify-content:center}
.sq picture-icon{margin-top:-1px}
.txt{font-size:12px;line-height:19px;color:#bababa;margin-top:-3.500px;letter-spacing:.13px}.txt p{margin:0}.txt p+p{margin-top:10px}
</style>
<div class="links"><div>개인정보 처리방침</div><div>사이트맵</div><div>임차문의</div><div>고객문의</div><div>인재채용</div></div>
<div class="info"><div>한국맥도날드(유)</div><div style="padding-left:1px">대표이사: 김기원</div><div>사업자등록번호:101-81-26409</div><div>전화주문: 1600=5252</div><div>COPYRIGHT©2019ALL RIGHTS RESERVED BY McDonald’s.</div></div>
<div><div class="social"><social-link kind="facebook"></social-link><social-link kind="instagram"></social-link><social-link kind="youtube"></social-link><social-link kind="kakao"></social-link><div class="badge"><picture-icon></picture-icon></div></div>
<div class="cert"><div class="sq"><picture-icon></picture-icon></div><div class="txt"><p>[인증범위:대외서비스(홈페이지,맥딜리버리, 채용,VOC,<br>쿠폰앱)(심사받지 않은 물리적 인프라 제외)]</p><p>[유효기간:2024. 08. 07. ~ 2027. 08. 06]</p></div></div></div>`);

define('store-page',`<style>:host{display:block}</style>
<site-header></site-header>
<hero-banner><span slot="title">제목을 입력해주세요</span><span slot="text">내용을 입력해주세요 내용을 입력해주세요</span></hero-banner>
<tab-bar><tab-item selected>지역별</tab-item><tab-item>이벤트매장</tab-item></tab-bar>
<search-panel></search-panel><map-section></map-section><site-footer></site-footer><floating-menu></floating-menu>`);
</script>
</body>
</html>
